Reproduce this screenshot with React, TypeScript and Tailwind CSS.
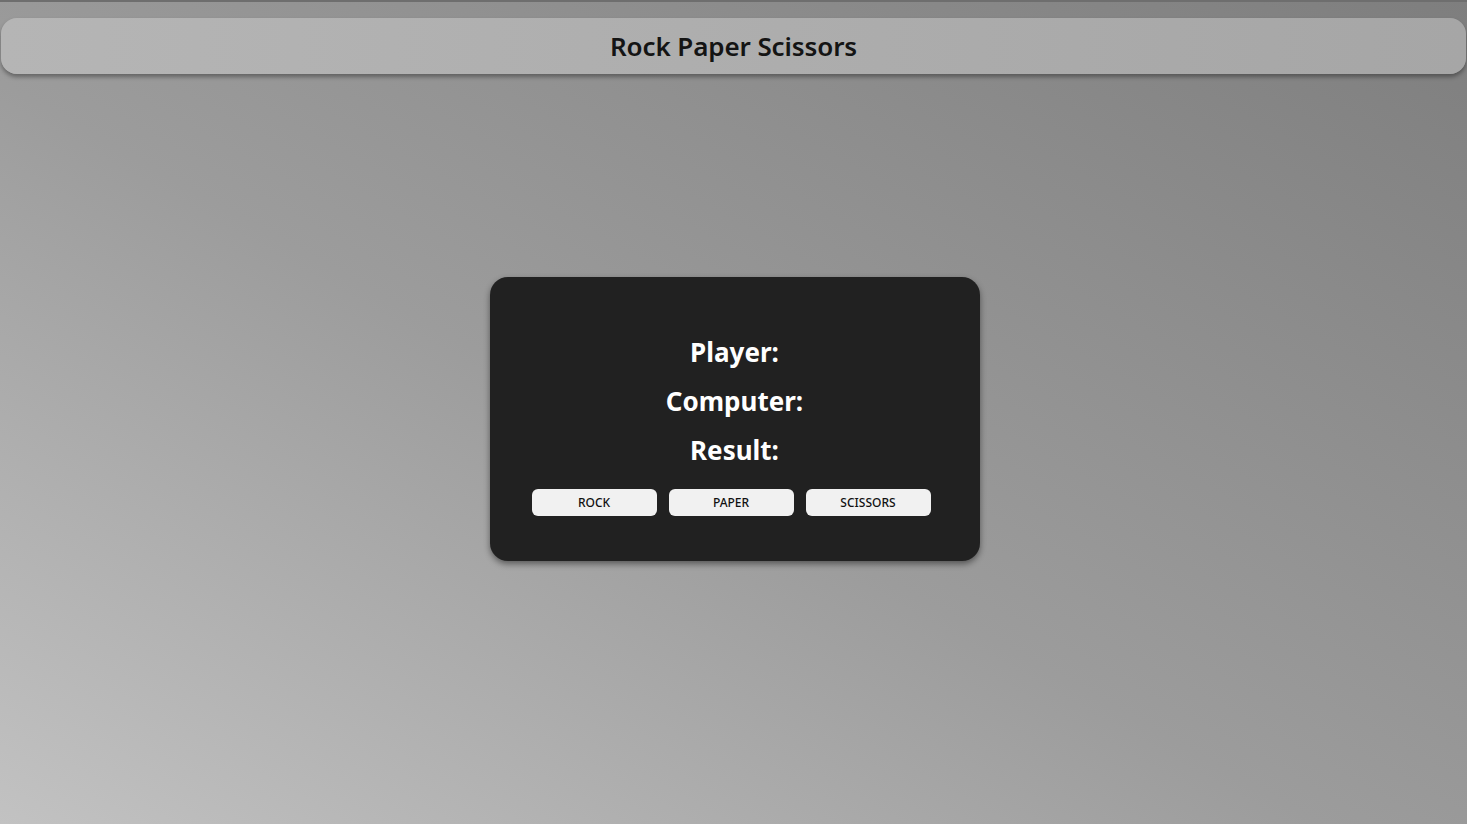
const App = () => {
  const choices = ["ROCK", "PAPER", "SCISSORS"];

  return (
    <div className="min-h-screen w-full bg-[linear-gradient(to_top_right,#c2c2c2_0%,#9c9c9c_45%,#7e7e7e_100%)] font-['Trebuchet_MS','Noto_Sans',sans-serif] overflow-hidden">
      <div className="h-[2px] w-full bg-[#6e6e6e]" />
      <div className="px-[1px] pt-[16px]">
        <header className="h-[56px] w-full rounded-[16px] bg-[linear-gradient(to_right,#b5b5b5,#a6a6a6)] shadow-[0_3px_4px_rgba(0,0,0,0.35)] flex items-center justify-center">
          <h1 className="text-[26px] font-semibold text-[#141414] tracking-[-0.1px]">Rock Paper Scissors</h1>
        </header>
      </div>

      <div className="flex justify-center mt-[203px] pl-[2px]">
        <div className="w-[490px] h-[284px] rounded-[18px] bg-[#212121] shadow-[0_3px_6px_rgba(0,0,0,0.45)] pt-[51px] flex flex-col items-center">
          <div className="text-[26px] font-bold text-white leading-[49px] text-center">Player:</div>
          <div className="text-[26px] font-bold text-white leading-[49px] text-center">Computer:</div>
          <div className="text-[26px] font-bold text-white leading-[49px] text-center">Result:</div>
          <div className="flex gap-[12px] mt-[14px] mr-[7px]">
            {choices.map((c) => (
              <button
                key={c}
                className="w-[125px] h-[27px] rounded-[6px] bg-[#f1f1f1] text-[12px] font-medium text-[#111] flex items-center justify-center cursor-pointer"
              >
                {c}
              </button>
            ))}
          </div>
        </div>
      </div>
    </div>
  );
};

export default App;
